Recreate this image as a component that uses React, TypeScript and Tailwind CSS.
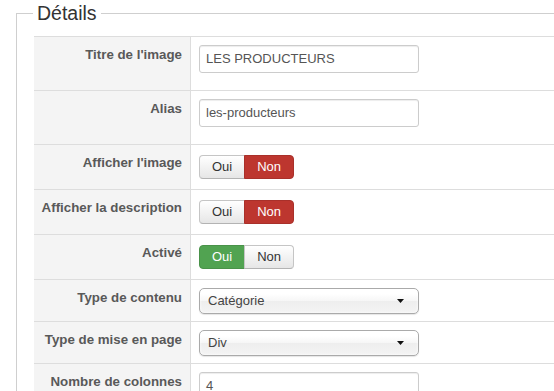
import React from 'react';

type Row =
    | { label: string; kind: 'text'; value: string }
    | { label: string; kind: 'toggle'; on: boolean }
    | { label: string; kind: 'select'; value: string };

const rows: Row[] = [
    { label: "Titre de l'image", kind: 'text', value: 'LES PRODUCTEURS' },
    { label: 'Alias', kind: 'text', value: 'les-producteurs' },
    { label: "Afficher l'image", kind: 'toggle', on: false },
    { label: 'Afficher la description', kind: 'toggle', on: false },
    { label: 'Activé', kind: 'toggle', on: true },
    { label: 'Type de contenu', kind: 'select', value: 'Catégorie' },
    { label: 'Type de mise en page', kind: 'select', value: 'Div' },
    { label: 'Nombre de colonnes', kind: 'text', value: '4' },
];

const rowHeight: Record<Row['kind'], string> = {
    text: 'h-[54px]',
    toggle: 'h-[45px]',
    select: 'h-[42px]',
};

const TextInput: React.FC<{ value: string }> = ({ value }) => (
    <div className="h-[28px] w-[220px] border border-[#ccc] rounded-[3px] bg-white px-[6px] flex items-center text-[13px] text-[#555] shadow-[inset_0_1px_1px_rgba(0,0,0,0.075)]">
        {value}
    </div>
);

const Toggle: React.FC<{ on: boolean }> = ({ on }) => {
    const plain = 'bg-[linear-gradient(#ffffff,#e6e6e6)] border-[#c5c5c5] border-b-[#b3b3b3] text-[#333]';
    return (
        <div className="flex text-[13px]">
            <span
                className={`h-[24px] px-[12px] flex items-center border rounded-l-[4px] ${on ? 'bg-[#51a351] border-[#499249] text-white' : plain
                    }`}
            >
                Oui
            </span>
            <span
                className={`h-[24px] px-[12px] -ml-px flex items-center border rounded-r-[4px] ${on ? plain : 'bg-[#bd362f] border-[#a9302a] text-white'
                    }`}
            >
                Non
            </span>
        </div>
    );
};

const Select: React.FC<{ value: string }> = ({ value }) => (
    <div className="h-[26px] w-[220px] border border-[#aaa] rounded-[5px] pl-[8px] pr-[14px] flex items-center justify-between text-[13px] text-[#444] bg-[linear-gradient(#ffffff_20%,#f6f6f6_50%,#eeeeee_52%,#f4f4f4_100%)] shadow-[inset_0_0_3px_#fff,0_1px_1px_rgba(0,0,0,0.1)]">
        <span>{value}</span>
        <svg width="7" height="4" viewBox="0 0 7 4">
            <path d="M0 0 H7 L3.5 4 Z" fill="#111" />
        </svg>
    </div>
);

export default function App() {
    return (
        <div className="w-[554px] h-[391px] overflow-hidden bg-white font-['Liberation_Sans',Arial,sans-serif]">
            <fieldset className="ml-4 w-[620px] border border-[#cfcfcf] pl-[17px]">
                <legend className="px-[4px] -ml-px text-[19.5px] leading-[26px] text-[#333]">Détails</legend>
                <div className="mt-[10px] border-t border-[#ddd]">
                    {rows.map((row) => (
                        <div key={row.label} className={`flex border-b border-[#ddd] ${rowHeight[row.kind]}`}>
                            <div className="w-[157px] shrink-0 bg-[#f4f4f4] border-r border-[#ddd] text-right pr-2 pt-[9px] text-[13.3px] leading-[18px] font-bold text-[#595959]">
                                {row.label}
                            </div>
                            <div className={`pl-2 ${row.kind === 'toggle' ? 'pt-[10px]' : 'pt-[8px]'}`}>
                                {row.kind === 'text' && <TextInput value={row.value} />}
                                {row.kind === 'toggle' && <Toggle on={row.on} />}
                                {row.kind === 'select' && <Select value={row.value} />}
                            </div>
                        </div>
                    ))}
                </div>
            </fieldset>
        </div>
    );
}
